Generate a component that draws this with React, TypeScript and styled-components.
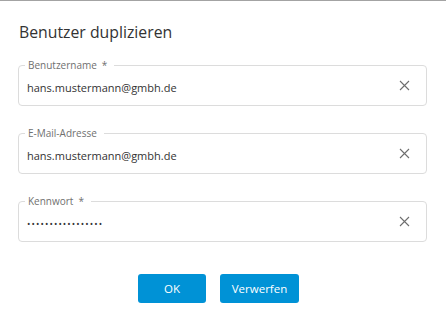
import styled, { createGlobalStyle } from 'styled-components'

const GlobalStyle = createGlobalStyle`
  html, body {
    margin: 0;
    padding: 0;
    background: #ffffff;
  }
  body {
    font-family: 'Open Sans', 'Liberation Sans', sans-serif;
    color: #333333;
  }
`

const Dialog = styled.div`
  width: 446px;
  height: 318px;
  box-sizing: border-box;
  border-top: 1px solid #a3a3a3;
  padding: 21px 19px 0 18px;
  display: flex;
  flex-direction: column;
`

const Title = styled.h2`
  margin: 0 0 17px 1px;
  font-size: 15.8px;
  line-height: 20px;
  font-weight: 400;
  color: #333333;
`

const Fields = styled.div`
  display: flex;
  flex-direction: column;
  gap: 21px;
`

const Field = styled.fieldset`
  margin: 0;
  padding: 0 16px 0 6px;
  border: 1px solid #dcdcdc;
  border-radius: 4px;
  min-width: 0;
`

const Legend = styled.legend`
  padding: 0 7px 0 3px;
  font-size: 10px;
  line-height: 12px;
  height: 12px;
  color: #707070;
`

const Required = styled.span`
  margin-left: 5px;
`

const Row = styled.div`
  display: flex;
  align-items: center;
  justify-content: space-between;
  height: 18px;
  padding: 8px 0 8px 2px;
`

const Value = styled.span<{ $secret?: boolean }>`
  font-size: ${(p) => (p.$secret ? '9px' : '11px')};
  line-height: 18px;
  color: #333333;
  letter-spacing: ${(p) => (p.$secret ? '1.1px' : '0')};
`

const Clear = styled.button`
  display: flex;
  align-items: center;
  justify-content: center;
  width: 12px;
  height: 12px;
  margin-bottom: 6px;
  padding: 0;
  border: 0;
  background: none;
  color: #6e6e6e;
  cursor: pointer;
`

const Actions = styled.div`
  display: flex;
  justify-content: center;
  gap: 14px;
  margin-top: 32px;
  padding-right: 8px;
`

const Button = styled.button<{ $width: number }>`
  width: ${(p) => p.$width}px;
  height: 29px;
  border: 0;
  border-radius: 3px;
  background: #0092d6;
  color: #ffffff;
  font-family: 'Open Sans', 'Liberation Sans', sans-serif;
  font-size: 11.5px;
  cursor: pointer;
`

const ClearIcon = () => (
  <svg width="11" height="11" viewBox="0 0 11 11">
    <path d="M1 1L10 10M10 1L1 10" stroke="currentColor" strokeWidth="1.1" fill="none" />
  </svg>
)

interface InputProps {
  label: string
  value: string
  required?: boolean
  secret?: boolean
}

const Input = ({ label, value, required, secret }: InputProps) => (
  <Field>
    <Legend>
      {label}
      {required && <Required>*</Required>}
    </Legend>
    <Row>
      <Value $secret={secret}>{secret ? '•'.repeat(value.length) : value}</Value>
      <Clear aria-label="Leeren">
        <ClearIcon />
      </Clear>
    </Row>
  </Field>
)

export default function App() {
  return (
    <>
      <GlobalStyle />
      <Dialog>
        <Title>Benutzer duplizieren</Title>
        <Fields>
          <Input label="Benutzername" value="hans.mustermann@gmbh.de" required />
          <Input label="E-Mail-Adresse" value="hans.mustermann@gmbh.de" />
          <Input label="Kennwort" value="geheimeskennwort1" required secret />
        </Fields>
        <Actions>
          <Button $width={68}>OK</Button>
          <Button $width={79}>Verwerfen</Button>
        </Actions>
      </Dialog>
    </>
  )
}
